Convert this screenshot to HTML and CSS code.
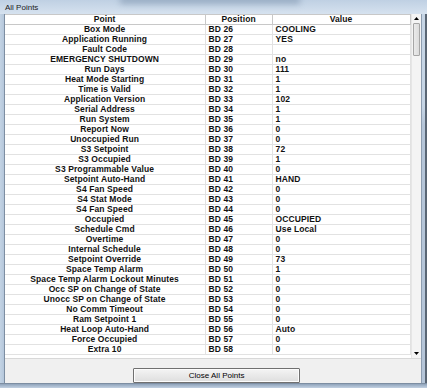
FILE: index.html
```html
<html>
	<head>
		<link rel="stylesheet" href="styles.css">
	</head>
	<body>
		<div class="window">
			<div class="titlebar"><span class="blur"></span><span class="title">All Points</span></div>
			<div class="middle">
				<div class="frame-left"></div>
				<div class="client">
					<div class="listbox">
						<div class="table">
							<div class="row head"><div>Point</div><div>Position</div><div>Value</div></div>
							<div class="row"><div>Box Mode</div><div>BD 26</div><div>COOLING</div></div>
							<div class="row"><div>Application Running</div><div>BD 27</div><div>YES</div></div>
							<div class="row"><div>Fault Code</div><div>BD 28</div><div></div></div>
							<div class="row"><div>EMERGENCY SHUTDOWN</div><div>BD 29</div><div>no</div></div>
							<div class="row"><div>Run Days</div><div>BD 30</div><div>111</div></div>
							<div class="row"><div>Heat Mode Starting</div><div>BD 31</div><div>1</div></div>
							<div class="row"><div>Time is Valid</div><div>BD 32</div><div>1</div></div>
							<div class="row"><div>Application Version</div><div>BD 33</div><div>102</div></div>
							<div class="row"><div>Serial Address</div><div>BD 34</div><div>1</div></div>
							<div class="row"><div>Run System</div><div>BD 35</div><div>1</div></div>
							<div class="row"><div>Report Now</div><div>BD 36</div><div>0</div></div>
							<div class="row"><div>Unoccupied Run</div><div>BD 37</div><div>0</div></div>
							<div class="row"><div>S3 Setpoint</div><div>BD 38</div><div>72</div></div>
							<div class="row"><div>S3 Occupied</div><div>BD 39</div><div>1</div></div>
							<div class="row"><div>S3 Programmable Value</div><div>BD 40</div><div>0</div></div>
							<div class="row"><div>Setpoint Auto-Hand</div><div>BD 41</div><div>HAND</div></div>
							<div class="row"><div>S4 Fan Speed</div><div>BD 42</div><div>0</div></div>
							<div class="row"><div>S4 Stat Mode</div><div>BD 43</div><div>0</div></div>
							<div class="row"><div>S4 Fan Speed</div><div>BD 44</div><div>0</div></div>
							<div class="row"><div>Occupied</div><div>BD 45</div><div>OCCUPIED</div></div>
							<div class="row"><div>Schedule Cmd</div><div>BD 46</div><div>Use Local</div></div>
							<div class="row"><div>Overtime</div><div>BD 47</div><div>0</div></div>
							<div class="row"><div>Internal Schedule</div><div>BD 48</div><div>0</div></div>
							<div class="row"><div>Setpoint Override</div><div>BD 49</div><div>73</div></div>
							<div class="row"><div>Space Temp Alarm</div><div>BD 50</div><div>1</div></div>
							<div class="row"><div>Space Temp Alarm Lockout Minutes</div><div>BD 51</div><div>0</div></div>
							<div class="row"><div>Occ SP on Change of State</div><div>BD 52</div><div>0</div></div>
							<div class="row"><div>Unocc SP on Change of State</div><div>BD 53</div><div>0</div></div>
							<div class="row"><div>No Comm Timeout</div><div>BD 54</div><div>0</div></div>
							<div class="row"><div>Ram Setpoint 1</div><div>BD 55</div><div>0</div></div>
							<div class="row"><div>Heat Loop Auto-Hand</div><div>BD 56</div><div>Auto</div></div>
							<div class="row"><div>Force Occupied</div><div>BD 57</div><div>0</div></div>
							<div class="row"><div>Extra 10</div><div>BD 58</div><div>0</div></div>
						</div>
						<div class="scrollbar">
							<div class="arrow"><svg width="5" height="3" viewBox="0 0 5 3"><path d="M0 3 L2.5 0 L5 3 Z" fill="#000"/></svg></div>
							<div class="track"><div class="thumb"></div></div>
							<div class="arrow"><svg width="5" height="3" viewBox="0 0 5 3"><path d="M0 0 L2.5 3 L5 0 Z" fill="#000"/></svg></div>
						</div>
					</div>
					<div class="buttons">
						<button class="close">Close All Points</button>
					</div>
				</div>
				<div class="frame-right"></div>
			</div>
			<div class="frame-bottom"></div>
		</div>
	</body>
</html>
```
FILE: styles.css
```css
body {
	margin: 0;
	background: #2b3440;
	font-family: "Liberation Sans", Arial, sans-serif;
}

.window {
	width: 427px;
	height: 388px;
	display: flex;
	flex-direction: column;
	background: #c9d8e8;
}

.titlebar {
	position: relative;
	height: 15px;
	background: linear-gradient(#bfd0e3, #d6e2ef);
	overflow: hidden;
}

.titlebar .blur {
	position: absolute;
	left: 120px;
	top: -4px;
	width: 180px;
	height: 8px;
	background: #7d93ad;
	filter: blur(3px);
	opacity: 0.6;
}

.title {
	position: relative;
	display: block;
	padding: 3px 0 0 5px;
	font-size: 8px;
	color: #1a1a1a;
}

.middle {
	flex: 1;
	display: flex;
}

.frame-left {
	width: 4px;
	background: linear-gradient(90deg, #c3d3e4, #b5c7db);
	border-right: 1px solid #7d8ea2;
}

.frame-right {
	width: 6px;
	background: linear-gradient(#c6d5e5 25%, #b5c5d8 30%);
	border-left: 1px solid #8d9db0;
	box-shadow: inset -2px 0 0 #5a6674;
}

.frame-bottom {
	height: 5px;
	background: linear-gradient(#8fa3ba, #c2d1e2);
	border-top: 1px solid #7d8ea2;
}

.client {
	flex: 1;
	display: flex;
	flex-direction: column;
	background: #f0f0f0;
}

.listbox {
	display: flex;
	height: 344px;
	background: #fff;
	border-bottom: 1px solid #d8d8d8;
}

.table {
	width: 406px;
}

.row {
	display: grid;
	grid-template-columns: 201px 67px 138px;
	height: 10px;
	border-bottom: 1px solid #e2e2e2;
	box-sizing: border-box;
	font-size: 8.5px;
	letter-spacing: 0.1px;
	font-weight: bold;
	line-height: 9px;
	color: #111;
}

.row div {
	border-right: 1px solid #e2e2e2;
	white-space: nowrap;
	overflow: hidden;
}

.row div:first-child {
	text-align: center;
}

.row div:nth-child(2) {
	padding-left: 3px;
}

.row div:nth-child(3) {
	padding-left: 3px;
}

.row.head {
	height: 11px;
	border-top: 1px solid #c8c8c8;
	border-bottom: 1px solid #c8c8c8;
}

.row.head div {
	text-align: center;
	padding-left: 0;
	border-right: 1px solid #c8c8c8;
}

.scrollbar {
	width: 9px;
	display: flex;
	flex-direction: column;
	background: #f4f4f4;
	border-left: 1px solid #e6e6e6;
}

.arrow {
	height: 9px;
	display: flex;
	align-items: center;
	justify-content: center;
	background: #f4f4f4;
}

.track {
	flex: 1;
}

.thumb {
	height: 31px;
	margin: 0 1px;
	background: linear-gradient(90deg, #eaeaea, #dcdcdc);
	border: 1px solid #a6a6a6;
	border-radius: 1px;
}

.buttons {
	display: flex;
	justify-content: center;
	padding-top: 9px;
	padding-left: 8px;
}

.close {
	width: 167px;
	height: 15px;
	padding: 0;
	font-family: "Liberation Sans", Arial, sans-serif;
	font-size: 8px;
	color: #000;
	background: linear-gradient(#f4f4f4, #dedede);
	border: 1px solid #707070;
	border-radius: 1px;
	box-shadow: inset 0 0 0 1px #fcfcfc;
}
```
